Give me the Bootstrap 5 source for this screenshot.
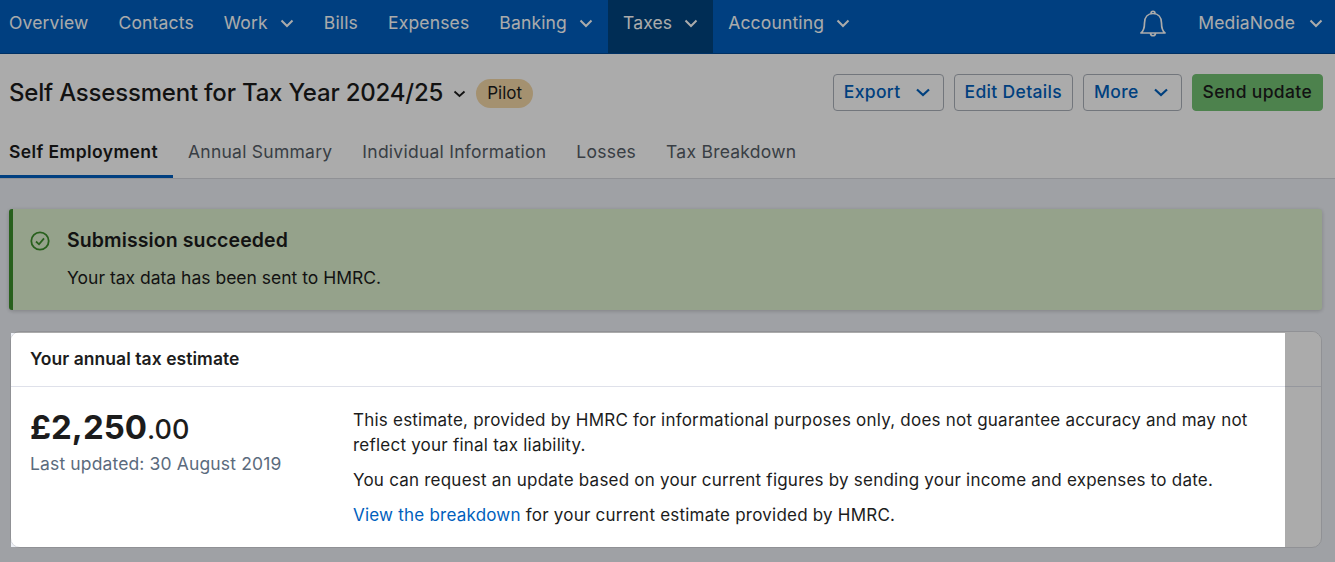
<!doctype html>
<html lang="en"><head><meta charset="utf-8"><title>Self Assessment</title>
<link rel="stylesheet" href="https://cdn.jsdelivr.net/npm/bootstrap@5.3.0/dist/css/bootstrap.min.css">
<style>
html,body{height:562px;overflow:hidden}
body{background:#eef1f7;font-family:"Inter","Noto Sans",sans-serif;color:#1c1c1c;font-size:16px;position:relative}
.topbar{height:54px;background:#005fbf;border-bottom:1px solid #004a96;padding:0;flex-wrap:nowrap}
.topbar .nav-link{color:#fff;font-size:17.5px;letter-spacing:.16px;padding:0 15px 7px;height:53px;display:flex;align-items:center;gap:12px}
.topbar .nav-link.active{background:#00437f;color:#fff}
.mainnav{margin-left:-6px}
.usernav{margin-right:-3px}
.usernav .bellink{padding:0 16px 7px 0}
.usernav .userlink{gap:14px}
.pagehead{background:#fff;border-bottom:1px solid #d7d9de;height:125px}
.headrow{height:77px;padding:0 12px 0 9px}
.pagetitle{font-size:24px;font-weight:500;margin:0;letter-spacing:-.2px}
.titlegroup{gap:10px;padding-top:2px}
.pilot{background:#f5d9a8;color:#1c1c1c;font-weight:400;font-size:17px;border-radius:14.500px;padding:0 11px;height:29px;display:inline-flex;align-items:center}
.actions{gap:10px}
.hbtn{background:#fff;border:1px solid #abb1ba;color:#0060bd;font-weight:500;font-size:17.5px;letter-spacing:.33px;height:37px;padding:0 10px;border-radius:4px;display:inline-flex;align-items:center;gap:14px}
.hbtn-menu{padding:0 12px 0 10px}
.hbtn-go{background:#74c274;border-color:#74c274;color:#1c1c1c}
.tabrow{height:47px}
.tabrow .nav-link{color:#555d66;font-size:17.5px;letter-spacing:.25px;padding:8px 15px 0;border-bottom:3px solid transparent;height:47px}
.tabrow .nav-link.active{color:#1c1c1c;font-weight:600;letter-spacing:.4px;border-bottom-color:#005fbf;padding-left:9px}
.donebox{background:#dff2d0;border:0;border-left:4px solid #3d8f2c;border-radius:3px;margin:30px 13px 21px 9px;height:101px;padding:17px 17px;box-shadow:0 1px 4px rgba(0,0,0,.2);color:#1c1c1c}
.doneicon{margin-top:5px;margin-right:1px}
.donehead{font-size:19.5px;font-weight:600;line-height:28px;letter-spacing:.1px}
.donetext{font-size:17.5px;line-height:26px;margin-top:11px}
.estcard{margin:0 13px 0 10px;height:217px;border-radius:10px;border:1px solid #d7d9de;overflow:hidden}
.estcard .card-header{flex:none;background:#fff;border-bottom:1px solid #dfe1ea;height:55px;padding:0 19px;display:flex;align-items:center;font-weight:600;font-size:17.500px;letter-spacing:.05px;border-radius:0}
.estbody{padding:18px 19px;display:flex}
.amountcol{width:323px;flex:none}
.amount{font-size:33px;font-weight:700;line-height:44px}
.amount span{font-size:27px;font-weight:500}
.updated{color:#5b6b7d;font-size:17.5px;letter-spacing:.14px;line-height:24px}
.estcopy{font-size:17px;letter-spacing:.22px;line-height:25px;width:915px;padding-top:3px}
.estcopy p{margin:0 0 10px}
.estcopy a{color:#0060bd;text-decoration:none}
.spot{position:absolute;left:11px;top:333px;width:1274px;height:214px;box-shadow:0 0 0 2000px rgba(0,0,0,.33);pointer-events:none}
</style></head><body>
<nav class="navbar topbar justify-content-between">
  <ul class="nav flex-nowrap mainnav">
    <li class="nav-item"><a class="nav-link" href="#">Overview</a></li>
    <li class="nav-item"><a class="nav-link" href="#">Contacts</a></li>
    <li class="nav-item"><a class="nav-link" href="#">Work <svg width="14" height="9" viewBox="0 0 14 9"><path d="M1.500 1.500 7 7l5.500-5.500" fill="none" stroke="currentColor" stroke-width="2"/></svg></a></li>
    <li class="nav-item"><a class="nav-link" href="#">Bills</a></li>
    <li class="nav-item"><a class="nav-link" href="#">Expenses</a></li>
    <li class="nav-item"><a class="nav-link" href="#">Banking <svg width="14" height="9" viewBox="0 0 14 9"><path d="M1.500 1.500 7 7l5.500-5.500" fill="none" stroke="currentColor" stroke-width="2"/></svg></a></li>
    <li class="nav-item"><a class="nav-link active" href="#">Taxes <svg width="14" height="9" viewBox="0 0 14 9"><path d="M1.500 1.500 7 7l5.500-5.500" fill="none" stroke="currentColor" stroke-width="2"/></svg></a></li>
    <li class="nav-item"><a class="nav-link" href="#">Accounting <svg width="14" height="9" viewBox="0 0 14 9"><path d="M1.500 1.500 7 7l5.500-5.500" fill="none" stroke="currentColor" stroke-width="2"/></svg></a></li>
  </ul>
  <ul class="nav flex-nowrap align-items-center usernav">
    <li class="nav-item"><a class="nav-link bellink" href="#" aria-label="Notifications"><svg width="28" height="29" viewBox="0 0 28 29"><path d="M2 24c2.500-2 3.500-4.500 3.500-10C5.500 8 9 4.500 14 4.500S22.500 8 22.500 14c0 5.500 1 8 3.500 10z M12 4.500C12 1.500 16 1.500 16 4.500 M11.500 24.500c.5 3 4.500 3 5 0" fill="none" stroke="currentColor" stroke-width="1.700" stroke-linejoin="round"/></svg></a></li>
    <li class="nav-item"><a class="nav-link userlink" href="#">MediaNode <svg width="14" height="9" viewBox="0 0 14 9"><path d="M1.500 1.500 7 7l5.500-5.500" fill="none" stroke="currentColor" stroke-width="2"/></svg></a></li>
  </ul>
</nav>
<header class="pagehead">
  <div class="d-flex justify-content-between align-items-center headrow">
    <div class="d-flex align-items-center titlegroup">
      <h1 class="pagetitle">Self Assessment for Tax Year 2024/25</h1>
      <svg width="13" height="8" viewBox="0 0 13 8"><path d="M1.500 1.500 6.500 6l5-4.500" fill="none" stroke="#1c1c1c" stroke-width="1.800"/></svg>
      <span class="badge pilot">Pilot</span>
    </div>
    <div class="d-flex actions">
      <button class="btn hbtn hbtn-menu">Export <svg width="16" height="9" viewBox="0 0 16 9"><path d="M2 1.500 8 7l6-5.500" fill="none" stroke="currentColor" stroke-width="2.200"/></svg></button>
      <button class="btn hbtn">Edit Details</button>
      <button class="btn hbtn hbtn-menu">More <svg width="16" height="9" viewBox="0 0 16 9"><path d="M2 1.500 8 7l6-5.500" fill="none" stroke="currentColor" stroke-width="2.200"/></svg></button>
      <button class="btn hbtn hbtn-go">Send update</button>
    </div>
  </div>
  <ul class="nav tabrow">
    <li class="nav-item"><a class="nav-link active" href="#">Self Employment</a></li>
    <li class="nav-item"><a class="nav-link" href="#">Annual Summary</a></li>
    <li class="nav-item"><a class="nav-link" href="#">Individual Information</a></li>
    <li class="nav-item"><a class="nav-link" href="#">Losses</a></li>
    <li class="nav-item"><a class="nav-link" href="#">Tax Breakdown</a></li>
  </ul>
</header>
<div class="alert donebox d-flex gap-3" role="alert">
  <svg class="flex-shrink-0 doneicon" width="20" height="20" viewBox="0 0 20 20"><circle cx="10" cy="10" r="8.700" fill="none" stroke="#3d8f2c" stroke-width="1.800"/><path d="M6 10.500l3 2.800 5-6" fill="none" stroke="#3d8f2c" stroke-width="1.800"/></svg>
  <div><div class="donehead">Submission succeeded</div><div class="donetext">Your tax data has been sent to HMRC.</div></div>
</div>
<section class="card estcard">
  <div class="card-header">Your annual tax estimate</div>
  <div class="estbody">
    <div class="amountcol"><div class="amount">£2,250<span>.00</span></div><div class="updated">Last updated: 30 August 2019</div></div>
    <div class="estcopy">
      <p>This estimate, provided by HMRC for informational purposes only, does not guarantee accuracy and may not reflect your final tax liability.</p>
      <p>You can request an update based on your current figures by sending your income and expenses to date.</p>
      <p><a href="#">View the breakdown</a> for your current estimate provided by HMRC.</p>
    </div>
  </div>
</section>
<div class="spot"></div>
<script src="https://cdn.jsdelivr.net/npm/bootstrap@5.3.0/dist/js/bootstrap.bundle.min.js"></script>
</body></html>
